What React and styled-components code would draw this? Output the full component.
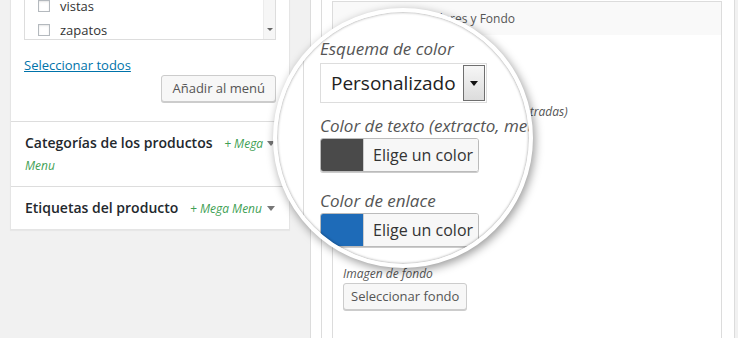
import React from "react";
import styled, { createGlobalStyle } from "styled-components";

const GlobalStyle = createGlobalStyle`
  * { box-sizing: border-box; }
  html, body { margin: 0; padding: 0; }
  body {
    background: #f1f1f1;
    font-family: "Open Sans", "Noto Sans", sans-serif;
    color: #444;
    overflow: hidden;
  }
`;

const Page = styled.div`
  position: relative;
  width: 738px;
  height: 338px;
  display: flex;
  align-items: flex-start;
  gap: 20px;
  padding-left: 10px;
  overflow: hidden;
`;

/* ---------- Left menu column ---------- */
const LeftCol = styled.div`
  flex: none;
  width: 280px;
  margin-top: -30px;
`;

const MenuPanel = styled.div`
  background: #fff;
  border: 1px solid #e5e5e5;
  box-shadow: 0 1px 1px rgba(0, 0, 0, 0.04);
`;

const TagSection = styled.div`
  padding: 13px 13px 19px 13px;
`;

const ListBox = styled.div`
  height: 56px;
  border: 1px solid #dddddd;
  display: flex;
  overflow: hidden;
  background: #fff;
`;

const ListItems = styled.div`
  flex: 1;
  display: flex;
  flex-direction: column;
  justify-content: flex-end;
  margin-bottom: -3px;
`;

const ListRow = styled.label`
  height: 24px;
  flex: none;
  display: flex;
  align-items: center;
  gap: 10px;
  padding-left: 13px;
  font-size: 13px;
  color: #333;
`;

const CheckBox = styled.span`
  width: 12px;
  height: 12px;
  flex: none;
  border: 1px solid #b4b9be;
  background: #fff;
  box-shadow: inset 0 1px 2px rgba(0, 0, 0, 0.1);
`;

const ScrollTrack = styled.div`
  width: 12px;
  flex: none;
  background: #f6f6f6;
  border-left: 1px solid #ececec;
  display: flex;
  flex-direction: column;
  justify-content: flex-end;
  align-items: center;
  padding-bottom: 8px;
`;

const ScrollArrow = styled.span`
  width: 0;
  height: 0;
  border-left: 3px solid transparent;
  border-right: 3px solid transparent;
  border-top: 3px solid #666;
`;

const SelectAll = styled.a`
  display: inline-block;
  margin-top: 15px;
  font-size: 13px;
  line-height: 20px;
  color: #0073aa;
  text-decoration: underline;
`;

const ButtonRow = styled.div`
  display: flex;
  justify-content: flex-end;
`;

const WPButton = styled.button`
  height: 27px;
  padding: 0 ${(p) => (p.$px != null ? p.$px : 10)}px;
  font-family: inherit;
  font-size: 13px;
  line-height: 25px;
  color: #555;
  background: #f7f7f7;
  border: 1px solid #cccccc;
  border-radius: 3px;
  box-shadow: 0 1px 0 #cccccc;
  white-space: nowrap;
`;

const AccSection = styled.div`
  border-top: 1px solid #dddddd;
`;

const AccTitle = styled.h3`
  margin: 0;
  display: flex;
  align-items: flex-start;
  padding: 10px 14px 10px 14px;
  font-size: 14px;
  font-weight: 600;
  line-height: 21px;
  color: #23282d;
`;

const TitleText = styled.span`
  flex: 1;
  min-width: 0;
`;

const MegaTag = styled.span`
  margin-left: 8px;
  font-size: 12px;
  font-style: italic;
  font-weight: 400;
  color: #3f9f55;
`;

const ToggleArrow = styled.span`
  flex: none;
  margin: 9px 0 0 2px;
  width: 0;
  height: 0;
  border-left: 4px solid transparent;
  border-right: 4px solid transparent;
  border-top: 5px solid #777;
`;

/* ---------- Right settings column ---------- */
const RightCol = styled.div`
  flex: none;
  width: 425px;
  align-self: stretch;
  background: #fff;
  border-left: 1px solid #dcdcdc;
  border-right: 1px solid #dcdcdc;
  padding-left: 10px;
`;

const InnerCol = styled.div`
  height: 100%;
  border-left: 1px solid #dcdcdc;
  padding: 1px 12px 0 10px;
`;

const SettingsPanel = styled.div`
  height: 100%;
  border: 1px solid #dcdcdc;
  border-bottom: none;
  background: #fff;
`;

const PanelHeader = styled.div`
  height: 33px;
  background: #f9f9f9;
  display: flex;
  align-items: center;
  padding-left: 92px;
  font-size: 12px;
  color: #555;
`;

const PanelBody = styled.div`
  padding: 12px 10px;
`;

const Field = styled.div`
  margin-bottom: ${(p) => p.$mb || 0}px;
`;

const FieldLabel = styled.span`
  display: block;
  font-size: 12px;
  font-style: italic;
  line-height: 18px;
  color: #555;
  white-space: nowrap;
`;

const SmallSelect = styled.div`
  width: 120px;
  height: 28px;
  border: 1px solid #ddd;
`;

const SmallPicker = styled.div`
  width: 115px;
  height: 27px;
  border: 1px solid #ccc;
  border-radius: 3px;
  display: flex;
  overflow: hidden;
`;

const SmallSwatch = styled.span`
  width: 30px;
  background: ${(p) => p.$color};
`;

/* ---------- Magnifier lens ---------- */
const Lens = styled.div`
  position: absolute;
  left: 273px;
  top: 8px;
  width: 260px;
  height: 260px;
  border-radius: 50%;
  border: 4px solid #fff;
  background: #fff;
  overflow: hidden;
  box-shadow: 2px 3px 10px rgba(0, 0, 0, 0.4);
  &::after {
    content: "";
    position: absolute;
    inset: 0;
    border-radius: 50%;
    box-shadow: inset 0 0 3px rgba(0, 0, 0, 0.45);
    pointer-events: none;
  }
`;

const MagPanel = styled.div`
  height: 100%;
  margin-left: 26px;
  border-left: 1px solid #dcdcdc;
  padding: 25px 0 0 16px;
`;

const MagLabel = styled.div`
  margin-top: ${(p) => p.$mt || 0}px;
  font-size: 17px;
  font-style: italic;
  line-height: 23px;
  color: #555;
  white-space: nowrap;
`;

const MagSelect = styled.div`
  margin-top: ${(p) => p.$mt || 0}px;
  width: 167px;
  height: 40px;
  border: 1px solid #dddddd;
  display: flex;
  align-items: center;
  justify-content: space-between;
  padding: 0 1px 0 10px;
  font-size: 19px;
  color: #222;
`;

const SelectArrowBox = styled.span`
  width: 22px;
  height: 36px;
  border: 1px solid #6f6f6f;
  background: linear-gradient(#f6f6f6, #dcdcdc);
  display: flex;
  align-items: center;
  justify-content: center;
`;

const SelectTriangle = styled.span`
  width: 0;
  height: 0;
  border-left: 4px solid transparent;
  border-right: 4px solid transparent;
  border-top: 5px solid #111;
`;

const MagPicker = styled.div`
  margin-top: ${(p) => p.$mt || 0}px;
  width: 159px;
  height: 34px;
  display: flex;
  border: 1px solid #bbbbbb;
  border-radius: 3px;
  overflow: hidden;
  box-shadow: 0 1px 0 #cccccc;
`;

const MagSwatch = styled.span`
  width: 42px;
  flex: none;
  background: ${(p) => p.$color};
`;

const MagPickerText = styled.span`
  flex: 1;
  display: flex;
  align-items: center;
  padding-left: 9px;
  border-left: 1px solid #cccccc;
  background: #f7f7f7;
  font-size: 16px;
  color: #333;
  white-space: nowrap;
`;

const textLabel = "Color de texto (extracto, metas y entradas)";

export default function App() {
  return (
    <>
      <GlobalStyle />
      <Page>
        <LeftCol>
          <MenuPanel>
            <TagSection>
              <ListBox>
                <ListItems>
                  <ListRow>
                    <CheckBox />
                    ropa
                  </ListRow>
                  <ListRow>
                    <CheckBox />
                    vistas
                  </ListRow>
                  <ListRow>
                    <CheckBox />
                    zapatos
                  </ListRow>
                </ListItems>
                <ScrollTrack>
                  <ScrollArrow />
                </ScrollTrack>
              </ListBox>
              <SelectAll href="#">Seleccionar todos</SelectAll>
              <ButtonRow>
                <WPButton>Añadir al menú</WPButton>
              </ButtonRow>
            </TagSection>
            <AccSection>
              <AccTitle>
                <TitleText>
                  Categorías de los productos <MegaTag>+ Mega Menu</MegaTag>
                </TitleText>
                <ToggleArrow />
              </AccTitle>
            </AccSection>
            <AccSection>
              <AccTitle>
                <TitleText>
                  Etiquetas del producto <MegaTag>+ Mega Menu</MegaTag>
                </TitleText>
                <ToggleArrow />
              </AccTitle>
            </AccSection>
          </MenuPanel>
        </LeftCol>

        <RightCol>
          <InnerCol>
            <SettingsPanel>
              <PanelHeader>Colores y Fondo</PanelHeader>
              <PanelBody>
                <Field $mb={10}>
                  <FieldLabel>Esquema de color</FieldLabel>
                  <SmallSelect />
                </Field>
                <Field $mb={36}>
                  <FieldLabel>{textLabel}</FieldLabel>
                  <SmallPicker>
                    <SmallSwatch $color="#4a4a4a" />
                  </SmallPicker>
                </Field>
                <Field $mb={36}>
                  <FieldLabel>Color de enlace</FieldLabel>
                  <SmallPicker>
                    <SmallSwatch $color="#1e6bb8" />
                  </SmallPicker>
                </Field>
                <Field>
                  <FieldLabel>Imagen de fondo</FieldLabel>
                  <WPButton $px={7}>Seleccionar fondo</WPButton>
                </Field>
              </PanelBody>
            </SettingsPanel>
          </InnerCol>
        </RightCol>

        <Lens>
          <MagPanel>
            <MagLabel>Esquema de color</MagLabel>
            <MagSelect $mt={3}>
              Personalizado
              <SelectArrowBox>
                <SelectTriangle />
              </SelectArrowBox>
            </MagSelect>
            <MagLabel $mt={11}>{textLabel}</MagLabel>
            <MagPicker $mt={1}>
              <MagSwatch $color="#4a4a4a" />
              <MagPickerText>Elige un color</MagPickerText>
            </MagPicker>
            <MagLabel $mt={17}>Color de enlace</MagLabel>
            <MagPicker $mt={1}>
              <MagSwatch $color="#1e6bb8" />
              <MagPickerText>Elige un color</MagPickerText>
            </MagPicker>
          </MagPanel>
        </Lens>
      </Page>
    </>
  );
}
